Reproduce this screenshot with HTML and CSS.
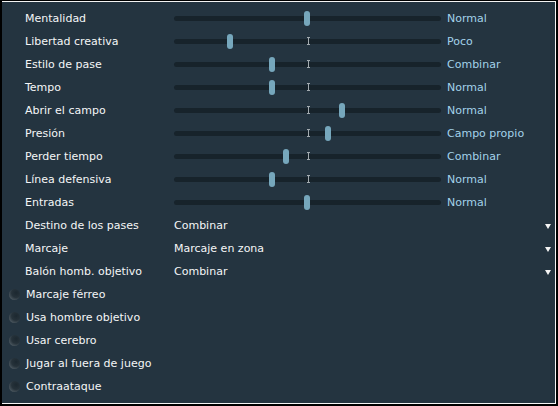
FILE: index.html
```html
<!DOCTYPE html>
<html>
<head>
<meta charset="utf-8">
<link rel="stylesheet" href="styles.css">
</head>
<body>
<div class="panel">
  <div class="row"><span class="label">Mentalidad</span><div class="track"><span class="mark"></span><span class="thumb" style="left:130px"></span></div><span class="value">Normal</span></div>
  <div class="row"><span class="label">Libertad creativa</span><div class="track"><span class="mark"></span><span class="thumb" style="left:53px"></span></div><span class="value">Poco</span></div>
  <div class="row"><span class="label">Estilo de pase</span><div class="track"><span class="mark"></span><span class="thumb" style="left:95px"></span></div><span class="value">Combinar</span></div>
  <div class="row"><span class="label">Tempo</span><div class="track"><span class="mark"></span><span class="thumb" style="left:95px"></span></div><span class="value">Normal</span></div>
  <div class="row"><span class="label">Abrir el campo</span><div class="track"><span class="mark"></span><span class="thumb" style="left:165px"></span></div><span class="value">Normal</span></div>
  <div class="row"><span class="label">Presión</span><div class="track"><span class="mark"></span><span class="thumb" style="left:151px"></span></div><span class="value">Campo propio</span></div>
  <div class="row"><span class="label">Perder tiempo</span><div class="track"><span class="mark"></span><span class="thumb" style="left:109px"></span></div><span class="value">Combinar</span></div>
  <div class="row"><span class="label">Línea defensiva</span><div class="track"><span class="mark"></span><span class="thumb" style="left:95px"></span></div><span class="value">Normal</span></div>
  <div class="row"><span class="label">Entradas</span><div class="track"><span class="mark"></span><span class="thumb" style="left:130px"></span></div><span class="value">Normal</span></div>
  <div class="row"><span class="label">Destino de los pases</span><span class="select">Combinar</span><span class="arrow"></span></div>
  <div class="row"><span class="label">Marcaje</span><span class="select">Marcaje en zona</span><span class="arrow"></span></div>
  <div class="row"><span class="label">Balón homb. objetivo</span><span class="select">Combinar</span><span class="arrow"></span></div>
  <div class="row check"><span class="radio"></span><span class="clabel">Marcaje férreo</span></div>
  <div class="row check"><span class="radio"></span><span class="clabel">Usa hombre objetivo</span></div>
  <div class="row check"><span class="radio"></span><span class="clabel">Usar cerebro</span></div>
  <div class="row check"><span class="radio"></span><span class="clabel">Jugar al fuera de juego</span></div>
  <div class="row check"><span class="radio"></span><span class="clabel">Contraataque</span></div>
</div>
</body>
</html>
```
FILE: styles.css
```css
html, body {
  margin: 0;
  padding: 0;
  background: #000;
}
body {
  padding: 1px 0 0 2px;
  width: 558px;
  height: 406px;
  box-sizing: border-box;
  overflow: hidden;
}
.panel {
  box-sizing: border-box;
  width: 554px;
  height: 403px;
  background: #243440;
  border-top: 1px solid #f4f4f4;
  border-right: 1px solid #f4f4f4;
  border-bottom: 1px solid #f4f4f4;
  padding: 5px 0 0 23px;
  display: flex;
  flex-direction: column;
  font-family: "DejaVu Sans", Verdana, sans-serif;
  font-size: 11px;
  color: #f4f6f7;
}
.row {
  height: 23px;
  display: flex;
  align-items: center;
  flex: none;
}
.label {
  width: 149px;
  flex: none;
  white-space: nowrap;
}
.track {
  position: relative;
  width: 267px;
  height: 5px;
  border-radius: 3px;
  background: #17232b;
  flex: none;
}
.thumb {
  position: absolute;
  top: -5px;
  width: 6px;
  height: 15px;
  border-radius: 3px;
  background: #76a7bc;
}
.mark {
  position: absolute;
  left: 133px;
  top: -2px;
  width: 3px;
  height: 8px;
  box-sizing: border-box;
  border-top: 1px solid #a3abb0;
  border-bottom: 1px solid #a3abb0;
  background: linear-gradient(to right, transparent 1px, #a3abb0 1px, #a3abb0 2px, transparent 2px);
}
.value {
  margin-left: 6px;
  color: #a3d2ea;
  white-space: nowrap;
}
.select {
  flex: 1;
  white-space: nowrap;
}
.arrow {
  width: 0;
  height: 0;
  border-left: 3.5px solid transparent;
  border-right: 3.5px solid transparent;
  border-top: 5px solid #f4f4f4;
  margin-right: 4px;
  margin-top: 1px;
}
.check {
  margin-left: -16px;
}
.radio {
  width: 11px;
  height: 11px;
  border-radius: 50%;
  background: radial-gradient(circle at 65% 35%, #1c2830 0%, #26323a 45%, #48545c 75%, #7a848a 100%);
  flex: none;
  margin-right: 6px;
}
.clabel {
  white-space: nowrap;
}
```
